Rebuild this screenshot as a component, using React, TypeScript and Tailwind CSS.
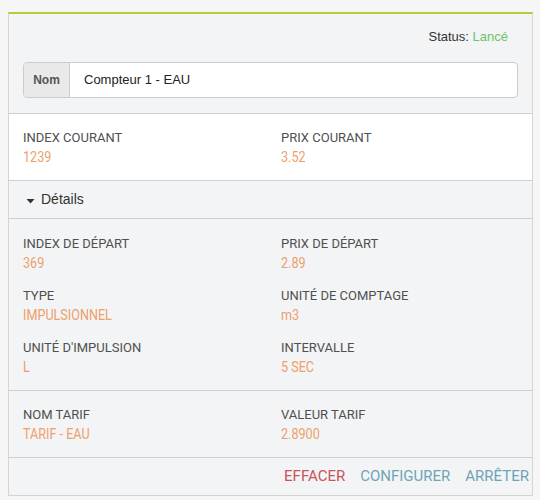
const labelCls = "text-[13px] leading-[18px] text-[#505050] font-['Roboto',sans-serif]";
const valueCls =
  "self-start origin-left scale-x-[0.84] whitespace-nowrap text-[15px] leading-[20px] text-[#ee9f6b] font-['Roboto',sans-serif]";

const Field = ({ label, value }: { label: string; value: string }) => (
  <div className="flex flex-col">
    <span className={labelCls}>{label}</span>
    <span className={valueCls}>{value}</span>
  </div>
);

const Row = ({ items }: { items: [string, string][] }) => (
  <div className="grid grid-cols-[258px_1fr]">
    {items.map(([l, v]) => (
      <Field key={l} label={l} value={v} />
    ))}
  </div>
);

export default function App() {
  return (
    <div className="min-h-[500px] bg-[#f6f6f6] pt-3 pl-2">
      <div className="w-[525px] border-x border-b border-[#d4d4d4] border-t-2 border-t-[#b3cd3c] bg-[#f3f4f5] font-['Liberation_Sans',Arial,sans-serif]">
        <div className="flex justify-end pr-[24px] pt-[13px] text-[13px] leading-[20px] text-[#333]">
          <span>
            Status: <span className="text-[#6cc36c]">Lancé</span>
          </span>
        </div>

        <div className="px-[14px] pt-[15px] pb-[15px]">
          <div className="flex h-[36px] overflow-hidden rounded-[4px] border border-[#cccccc] bg-white">
            <div className="flex w-[46px] items-center justify-center border-r border-[#ccc] bg-[#e9e9e9] text-[12px] font-bold text-[#555]">
              Nom
            </div>
            <div className="flex items-center pl-[14px] text-[13px] text-[#222]">
              Compteur 1 - EAU
            </div>
          </div>
        </div>

        <div className="border-t border-[#d0d0d0] bg-white px-[14px] pt-[15px] pb-[13px]">
          <Row items={[["INDEX COURANT", "1239"], ["PRIX COURANT", "3.52"]]} />
        </div>

        <div className="flex h-[38px] items-center gap-[6px] border-t border-[#d0d0d0] pl-[17px] text-[14px] text-[#333]">
          <svg width="9" height="6" viewBox="0 0 9 6" className="mt-[3px]">
            <path d="M0.5 1 L8.5 1 L4.5 5.5 Z" fill="#333" />
          </svg>
          <span>Détails</span>
        </div>

        <div className="flex flex-col gap-[14px] border-t border-[#d0d0d0] px-[14px] pt-[16px] pb-[13px]">
          <Row items={[["INDEX DE DÉPART", "369"], ["PRIX DE DÉPART", "2.89"]]} />
          <Row items={[["TYPE", "IMPULSIONNEL"], ["UNITÉ DE COMPTAGE", "m3"]]} />
          <Row items={[["UNITÉ D'IMPULSION", "L"], ["INTERVALLE", "5 SEC"]]} />
        </div>

        <div className="border-t border-[#d0d0d0] px-[14px] pt-[15px] pb-[13px]">
          <Row items={[["NOM TARIF", "TARIF - EAU"], ["VALEUR TARIF", "2.8900"]]} />
        </div>

        <div className="flex h-[38px] items-center justify-end gap-[15px] border-t border-[#d0d0d0] pr-[3px] text-[15px] font-['Roboto',sans-serif]">
          <span className="text-[#c9555a]">EFFACER</span>
          <span className="text-[#6fa4b5]">CONFIGURER</span>
          <span className="text-[#6fa4b5]">ARRÊTER</span>
        </div>
      </div>
    </div>
  );
}
